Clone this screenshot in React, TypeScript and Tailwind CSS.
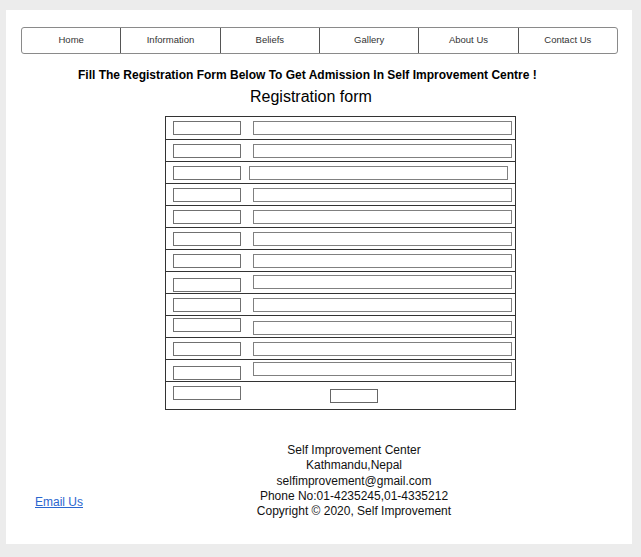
import React from 'react';

const navItems = ['Home', 'Information', 'Beliefs', 'Gallery', 'About Us', 'Contact Us'];

// per-row nudges of the left/right boxes, read off the picture
const rows = [
  { l: 0, r: 0, rx: 0 },
  { l: 0, r: 0, rx: 0 },
  { l: 0, r: 0, rx: -4 },
  { l: 0, r: 0, rx: 0 },
  { l: 0, r: 0, rx: 0 },
  { l: 0, r: 0, rx: 0 },
  { l: 0, r: 0, rx: 0 },
  { l: 2, r: -1, rx: 0 },
  { l: 0, r: 0, rx: 0 },
  { l: -2, r: 1, rx: 0 },
  { l: 0, r: 0, rx: 0 },
  { l: 2, r: -2, rx: 0 },
];

export default function App() {
  return (
    <div className="h-[557px] w-[641px] bg-[#ececec] pl-[6px] pt-[10px] font-['Liberation_Sans',Arial,sans-serif] text-black">
      <div className="h-[534px] w-[626px] bg-white pt-[17px]">
        <nav className="ml-[15px] flex h-[27px] w-[597px] rounded-[3px] border border-[#8a8a8a]">
          {navItems.map((item, i) => (
            <div
              key={item}
              className={`flex flex-1 items-center justify-center text-[9.5px] text-[#333] ${
                i > 0 ? 'border-l border-[#555]' : ''
              }`}
            >
              {item}
            </div>
          ))}
        </nav>

        <h3 className="mt-[14px] ml-[72px] text-[12px] leading-[14px] font-bold">
          Fill The Registration Form Below To Get Admission In Self Improvement Centre !
        </h3>
        <h2 className="mt-[5px] ml-[244px] text-[16px] leading-[19px]">Registration form</h2>

        <div className="mt-[10px] ml-[159px] w-[351px] border border-[#333]">
          {rows.map((row, i) => (
            <div
              key={i}
              className={`relative h-[22px] ${i > 0 ? 'border-t border-[#333]' : ''}`}
            >
              <div
                className="absolute left-[7px] h-[14px] w-[68px] border border-[#707070]"
                style={{ top: 4 + row.l }}
              />
              <div
                className="absolute h-[14px] w-[259px] border border-[#808080]"
                style={{ top: 4 + row.r, left: 87 + row.rx }}
              />
            </div>
          ))}
          <div className="relative h-[28px] border-t border-[#333]">
            <div className="absolute top-[4px] left-[7px] h-[14px] w-[68px] border border-[#707070]" />
            <div className="absolute top-[7px] left-[164px] h-[14px] w-[48px] border border-[#666]" />
          </div>
        </div>

        <footer className="mt-[33px] grid grid-cols-[199px_240px] items-end pl-[29px] text-[12px] leading-[15.25px]">
          <a href="#" className="mb-[9px] text-[#2a66cf] underline">
            Email Us
          </a>
          <div className="text-center text-[#111]">
            <div>Self Improvement Center</div>
            <div>Kathmandu,Nepal</div>
            <div>selfimprovement@gmail.com</div>
            <div>Phone No:01-4235245,01-4335212</div>
            <div>Copyright © 2020, Self Improvement</div>
          </div>
        </footer>
      </div>
    </div>
  );
}
